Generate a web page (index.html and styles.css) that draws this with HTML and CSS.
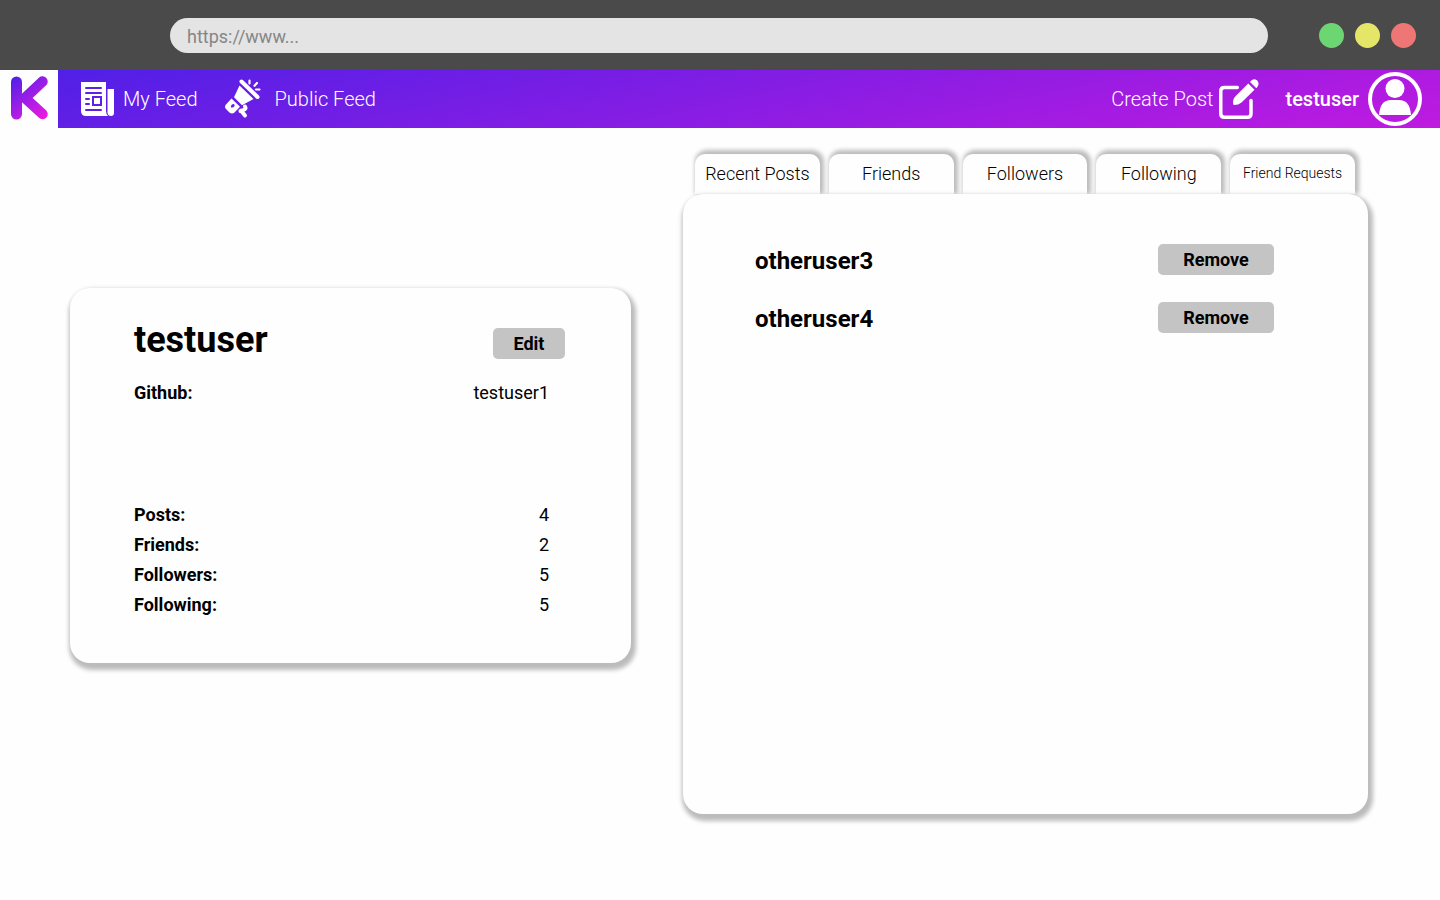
FILE: index.html
```html
<!DOCTYPE html>
<html lang="en">
<head>
<meta charset="utf-8">
<title>testuser</title>
<link rel="stylesheet" href="styles.css">
</head>
<body>
<header class="browser-bar">
  <input class="address" type="text" placeholder="https://www..." aria-label="Address">
  <div class="lights"><span class="light light-green"></span><span class="light light-yellow"></span><span class="light light-red"></span></div>
</header>
<nav class="navbar">
  <a class="logo" href="#" aria-label="Home">
    <svg width="58" height="58" viewBox="0 0 58 58" fill="none" stroke="url(#k)" stroke-width="11" stroke-linecap="round" stroke-linejoin="round">
      <defs><linearGradient id="k" gradientUnits="userSpaceOnUse" x1="12" y1="8" x2="46" y2="48"><stop offset="0" stop-color="#4e20ea"/><stop offset="1" stop-color="#f01be0"/></linearGradient></defs>
      <path d="M16.500 12V44"/><path stroke-width="10.500" d="M42.500 11.500L25 28L42.500 44"/>
    </svg>
  </a>
  <div class="nav-links">
    <a class="nav-item" href="#">
      <svg width="34" height="34" viewBox="0 0 34 34" fill="#fff">
        <path d="M0 0H25V29Q25 32 27 34H5Q0 34 0 29ZM26.500 7H33V31Q33 34 30 34T26.500 31Z"/>
        <g stroke="#5f1fe4" stroke-width="2" stroke-linecap="round" fill="none"><path d="M5 6H20M5 11H20M5 17H8M5 22H8M5 28H20"/><rect x="12" y="15" width="8" height="8" stroke-linecap="butt"/></g>
      </svg>
      <span>My Feed</span>
    </a>
    <a class="nav-item nav-public" href="#">
      <svg width="36" height="40" viewBox="0 0 36 40" fill="#fff">
        <path d="M16.500 2.500L32.500 18" stroke="#fff" stroke-width="4" stroke-linecap="round"/>
        <path d="M14.500 6.500L28.500 20L17 26.300L9 18.300Z"/>
        <path fill-rule="evenodd" d="M6.500 19.500L15 27.800L9.500 33.500Q7 35.500 4.500 33.500L1 30Q-1 27.500 1 25.500ZM8 25Q5.500 26 6 28.500Q8.500 29 9.500 27Q10 25 8 25Z"/>
        <path d="M15.500 32Q22 30.500 20 27.500M16 31.500L20 36.500" stroke="#fff" stroke-width="4" stroke-linecap="round" fill="none"/>
        <path d="M24.500 1.500V4.500M32 4L29.500 6.800M34.500 10.500H31" stroke="#fff" stroke-width="2.200" stroke-linecap="round"/>
      </svg>
      <span>Public Feed</span>
    </a>
  </div>
  <div class="nav-user">
    <a class="nav-item nav-create" href="#">
      <span>Create Post</span>
      <svg width="40" height="40" viewBox="0 0 40 40" fill="#fff">
        <path d="M18.300 8.500H5.500Q1.750 8.500 1.750 12V34.500Q1.750 38.250 5.500 38.250H28.500Q32 38.250 32 34.500V21.500" fill="none" stroke="#fff" stroke-width="3.500" stroke-linecap="round"/>
        <path d="M29.300 4.500L35.500 10.700L22.500 23.500Q19.500 26 15 26Q13.500 25.500 14.200 21.500Q14.800 18.500 16.500 17.300ZM31 3Q34-1.500 38 1.300Q41.500 5 37.300 9.200Z"/>
      </svg>
    </a>
    <a class="profile" href="#">
      <span>testuser</span>
      <svg width="54" height="54" viewBox="0 0 54 54" fill="#fff">
        <circle cx="27" cy="27" r="25" fill="none" stroke="#fff" stroke-width="4"/>
        <circle cx="27" cy="16.500" r="9.500"/>
        <path d="M11 43Q12 28 23 28H31Q42 28 43 43Z"/>
      </svg>
    </a>
  </div>
</nav>
<main class="page">
  <section class="card">
    <div class="card-head"><h1 class="username">testuser</h1><button class="button button-edit" type="button">Edit</button></div>
    <dl class="facts facts-links"><div class="fact"><dt>Github:</dt><dd>testuser1</dd></div></dl>
    <dl class="facts">
      <div class="fact"><dt>Posts:</dt><dd>4</dd></div>
      <div class="fact"><dt>Friends:</dt><dd>2</dd></div>
      <div class="fact"><dt>Followers:</dt><dd>5</dd></div>
      <div class="fact"><dt>Following:</dt><dd>5</dd></div>
    </dl>
  </section>
  <section class="social">
    <div class="tabs">
      <button class="tab" type="button">Recent Posts</button>
      <button class="tab" type="button">Friends</button>
      <button class="tab" type="button">Followers</button>
      <button class="tab" type="button">Following</button>
      <button class="tab tab-small" type="button">Friend Requests</button>
    </div>
    <ul class="panel">
      <li class="person"><span>otheruser3</span><button class="button" type="button">Remove</button></li>
      <li class="person"><span>otheruser4</span><button class="button" type="button">Remove</button></li>
    </ul>
  </section>
</main>
</body>
</html>
```
FILE: styles.css
```css
* { box-sizing: border-box; }
body { margin: 0; background: #fefefe; color: #000; font-family: Roboto, sans-serif; font-size: 18px; }
a { color: inherit; text-decoration: none; }
svg { display: block; flex: none; }
button { font-family: inherit; color: inherit; border: 0; cursor: pointer; }

.browser-bar { display: flex; align-items: center; gap: 51px; height: 70px; padding: 0 24px 0 170px; background: #4a4a4a; }
.address { flex: 1; min-width: 0; height: 35px; padding: 2px 17px 0; border: 0; border-radius: 18px; background: #e4e4e4; font: 18px Roboto, sans-serif; }
.address::placeholder { color: #868686; opacity: 1; }
.lights { display: flex; gap: 11px; }
.light { width: 25px; height: 25px; border-radius: 50%; }
.light-green { background: #6cd672; }
.light-yellow { background: #e5e667; }
.light-red { background: #ee7674; }

.navbar { display: flex; height: 58px; color: #fff; font-size: 20px; font-weight: 300; background: linear-gradient(168deg, #4c20e7, #c01ae0); }
.logo { background: #fefefe; }
.nav-links { display: flex; align-items: center; flex: 1; gap: 27px; padding-left: 23px; }
.nav-item { display: flex; align-items: center; gap: 8px; }
.nav-public { gap: 14px; }
.nav-user { display: flex; align-items: center; gap: 26px; padding-right: 18px; }
.nav-create { gap: 6px; }
.profile { display: flex; align-items: center; gap: 9px; font-weight: 500; }

.page { display: grid; grid-template-columns: 561fr 685fr; gap: 52px; align-items: start; padding: 26px 72px 80px 70px; }
.card, .panel { border-radius: 20px; background: #fefefe; box-shadow: 2px 4px 4px 3px #bcbcbc; }
.card { margin-top: 134px; padding: 31px 66px 43px 64px; }
.card-head { display: flex; justify-content: space-between; align-items: center; height: 42px; }
.username { margin: 0; font-size: 36px; line-height: 42px; font-weight: 700; }
.button { width: 116px; height: 31px; padding: 0; border-radius: 5px; background: #c4c4c4; font-size: 18px; font-weight: 700; }
.button-edit { width: 72px; margin-top: 6px; }
.facts { margin: 0; padding-right: 16px; }
.facts-links { padding-top: 17px; padding-bottom: 92px; }
.fact { display: flex; justify-content: space-between; line-height: 30px; }
.fact dt { font-weight: 700; }
.fact dd { margin: 0; }

.tabs { display: grid; grid-template-columns: repeat(5, 1fr); gap: 9px; padding: 0 13px 0 12px; }
.tab { height: 40px; padding: 0 0 2px; border-radius: 10px 10px 0 0; background: #fefefe; box-shadow: 2px -2px 4px 2px #bcbcbc; font-size: 18px; font-weight: 300; white-space: nowrap; }
.tab-small { font-size: 14px; }
.panel { position: relative; display: flex; flex-direction: column; gap: 24px; min-height: 620px; margin: 0; padding: 50px 94px 50px 72px; list-style: none; }
.person { display: flex; justify-content: space-between; align-items: flex-start; font-size: 24px; font-weight: 700; line-height: 34px; }
```
